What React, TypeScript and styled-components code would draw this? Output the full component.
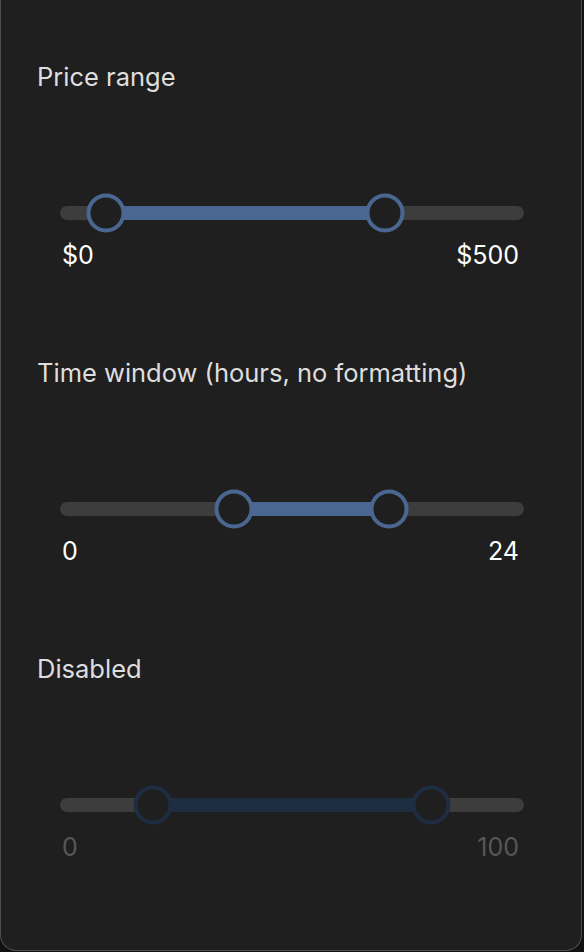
import React from "react";
import styled, { createGlobalStyle } from "styled-components";

const GlobalStyle = createGlobalStyle`
  html, body {
    margin: 0;
    padding: 0;
    background: #111111;
  }
  body {
    font-family: Inter, "Noto Sans", "Liberation Sans", sans-serif;
    -webkit-font-smoothing: antialiased;
  }
`;

const Panel = styled.div`
  box-sizing: border-box;
  width: 582px;
  height: 951px;
  background: #1f1f1f;
  border: 1px solid #4e4e4e;
  border-top: none;
  border-radius: 0 0 16px 16px;
  padding: 61px 33px 0 35px;
  display: flex;
  flex-direction: column;
  gap: 86px;
`;

const Section = styled.section`
  display: flex;
  flex-direction: column;
`;

const Label = styled.div`
  font-size: 25.5px;
  line-height: 32px;
  color: #dedede;
  padding-left: 1px;
  white-space: nowrap;
`;

const SliderArea = styled.div`
  margin: 100px 24px 0 24px;
  display: flex;
  flex-direction: column;
  gap: 6px;
`;

const Root = styled.div`
  position: relative;
  height: 40px;
  display: flex;
  align-items: center;
`;

const Track = styled.div`
  position: relative;
  flex: 1;
  height: 14px;
  border-radius: 7px;
  background: #3d3d3d;
`;

const Range = styled.div<{ $disabled?: boolean }>`
  position: absolute;
  top: 0;
  bottom: 0;
  background: ${(p) => (p.$disabled ? "#1f2d42" : "#4a6792")};
`;

const Thumb = styled.div<{ $disabled?: boolean }>`
  position: absolute;
  top: 50%;
  width: 39px;
  height: 39px;
  box-sizing: border-box;
  border-radius: 50%;
  border: 4px solid ${(p) => (p.$disabled ? "#1f2d42" : "#4a6792")};
  background: #1f1f1f;
  transform: translate(-50%, -50%);
`;

const Values = styled.div<{ $disabled?: boolean }>`
  display: flex;
  justify-content: space-between;
  padding: 0 5px 0 2px;
  font-size: 25px;
  line-height: 32px;
  color: ${(p) => (p.$disabled ? "#575757" : "#ffffff")};
`;

type RangeProps = {
  label: string;
  min: number;
  max: number;
  value: [number, number];
  format?: (n: number) => string;
  disabled?: boolean;
};

function RangeSlider({ label, min, max, value, format, disabled }: RangeProps) {
  const pct = (v: number) => ((v - min) / (max - min)) * 100;
  const a = pct(value[0]);
  const b = pct(value[1]);
  const fmt = format ?? ((n: number) => String(n));
  return (
    <Section>
      <Label>{label}</Label>
      <SliderArea>
        <Root aria-disabled={disabled}>
          <Track>
            <Range $disabled={disabled} style={{ left: `${a}%`, right: `${100 - b}%` }} />
            <Thumb $disabled={disabled} style={{ left: `${a}%` }} />
            <Thumb $disabled={disabled} style={{ left: `${b}%` }} />
          </Track>
        </Root>
        <Values $disabled={disabled}>
          <span>{fmt(min)}</span>
          <span>{fmt(max)}</span>
        </Values>
      </SliderArea>
    </Section>
  );
}

export default function App() {
  return (
    <>
      <GlobalStyle />
      <Panel>
        <RangeSlider
          label="Price range"
          min={0}
          max={500}
          value={[50, 350]}
          format={(n) => `$${n}`}
        />
        <RangeSlider
          label="Time window (hours, no formatting)"
          min={0}
          max={24}
          value={[9, 17]}
        />
        <RangeSlider label="Disabled" min={0} max={100} value={[20, 80]} disabled />
      </Panel>
    </>
  );
}
